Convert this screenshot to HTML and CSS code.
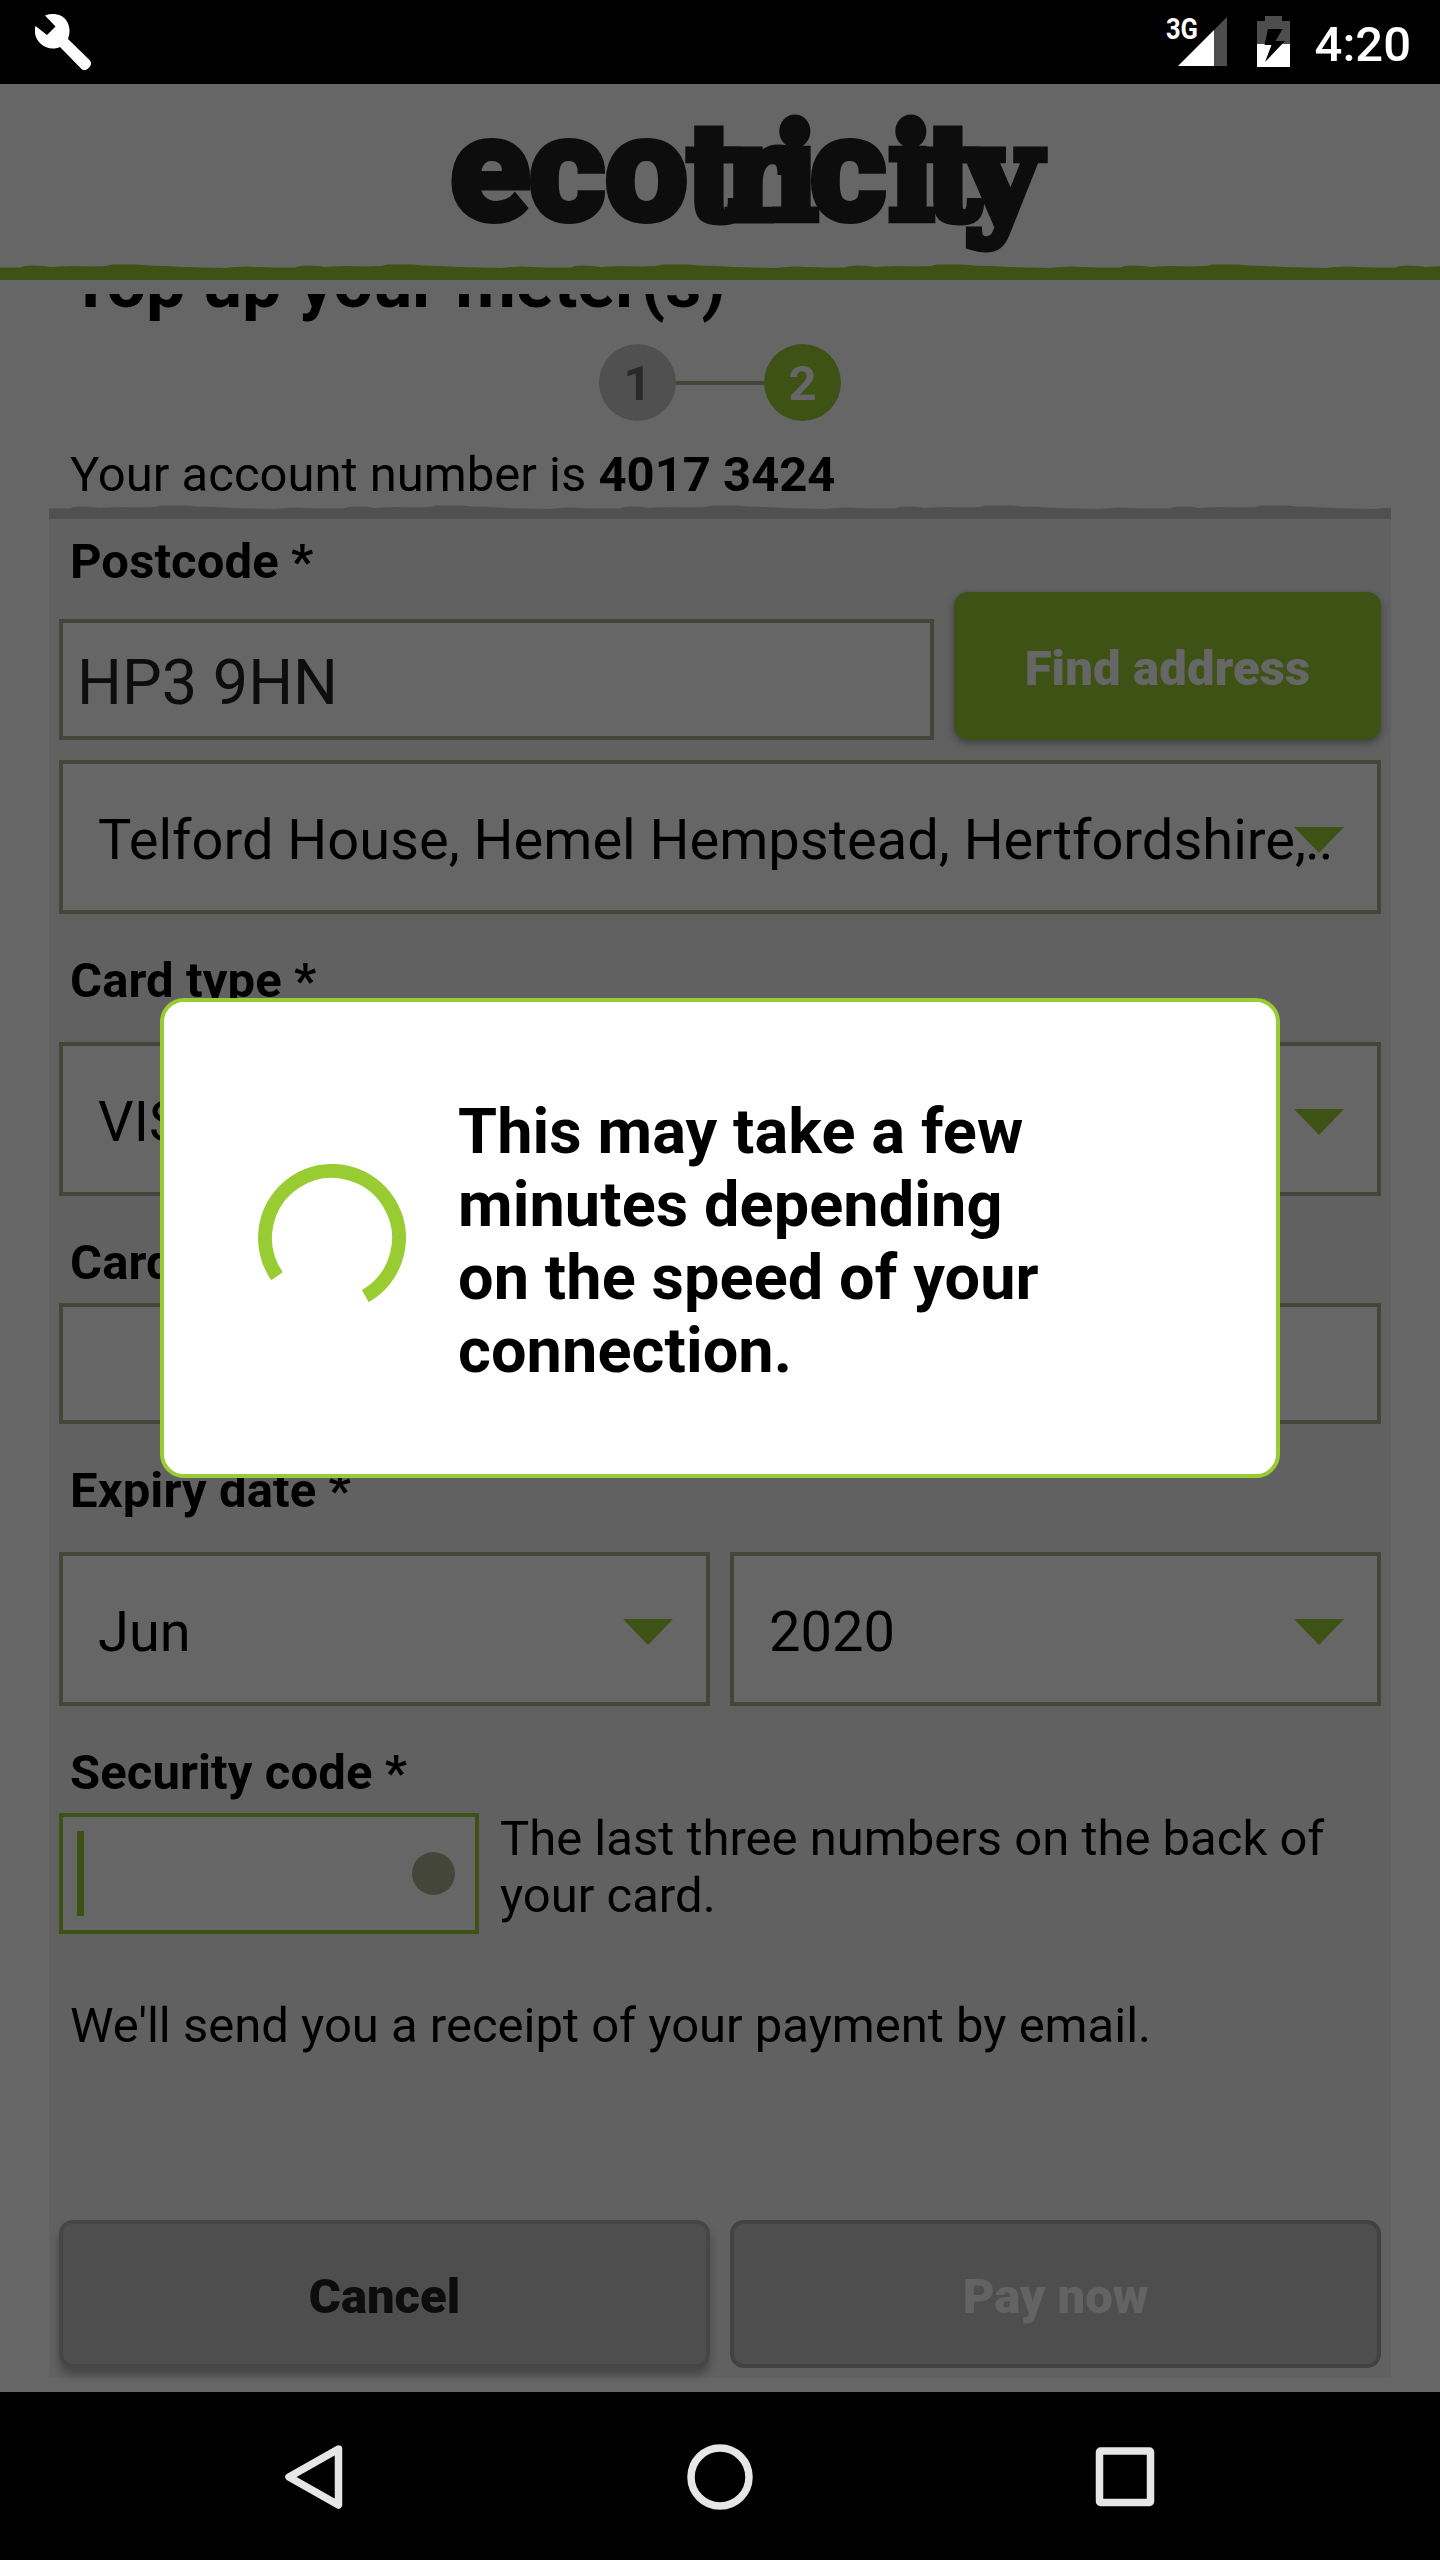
FILE: index.html
```html
<!DOCTYPE html>
<html lang="en">
<head>
<meta charset="utf-8">
<title>Top up your meter(s)</title>
<link rel="stylesheet" href="styles.css">
</head>
<body>
<div class="device">
  <div class="statusbar">
    <svg class="wrench" viewBox="0 0 56 56" width="56" height="56"><path d="M0.5 12 L12 21 L20.5 12.500 L10 1.500 C18-1.500 27 .5 31 6 C35 11.500 35.500 18 33 25 L54.500 46 C56.500 48 56.500 51 54.500 53 L52.500 55 C50.500 56.500 48 56.500 46.500 55 L25 33 C18 36 11 34.500 6 30 C0 24.500-1 18 .5 12Z"/></svg>
    <div class="status-right">
      <svg class="signal" viewBox="0 0 60 52" width="60" height="52">
        <path class="dim" d="M60 1V50H47V14Z"/><path d="M47 14V50H11Z"/>
        <text x="-1" y="23" textLength="32" lengthAdjust="spacingAndGlyphs">3G</text>
      </svg>
      <svg class="battery" viewBox="0 0 33 52" width="33" height="52">
        <path class="dim" d="M8 0H25V5H33V28H0V5H8Z"/><path d="M0 28H33V51H0Z"/>
        <path class="bolt" d="M11 13H25.500L18.500 25H28L8 46L14.500 29H7.500Z"/>
      </svg>
      <span class="clock">4:20</span>
    </div>
  </div>

  <div class="app">
    <header class="header">
      <svg class="logo" viewBox="0 0 600 140" width="600" height="140" role="img" aria-label="ecotricity">
        <text y="107"><tspan class="round" x="-2 77 153">eco</tspan><tspan class="slab" x="236 274 322" y="105">tri</tspan><tspan class="round" x="358" y="107">c</tspan><tspan class="slab" x="438 475" y="105">it</tspan><tspan class="slab wide" x="513" y="105">y</tspan></text>
      </svg>
      <svg class="torn green" width="1440" height="16">
        <defs><pattern id="torn-green" width="275" height="16" patternUnits="userSpaceOnUse"><path d="M0 16V3.500H20L25 2L32 1.500L44 2L50 3L58 2.500L72 2L90 2.500L106 2L112 .5H138L148 1.500L165 2L185 3L205 3.500L225 4L236 3L246 2.500L258 3L275 3.500V16Z"/></pattern></defs>
        <rect width="1440" height="16" fill="url(#torn-green)"/>
      </svg>
    </header>

    <main class="content">
      <div class="heading-clip"><h1>Top up your meter(s)</h1></div>
      <div class="steps"><span class="step">1</span><span class="step-line"></span><span class="step current">2</span></div>
      <p class="account">Your account number is <b>4017 3424</b></p>
      <svg class="torn" width="1342" height="14">
        <defs><pattern id="torn-grey" width="275" height="14" patternUnits="userSpaceOnUse"><path d="M0 14V3.500H20L25 2L32 1.500L44 2L50 3L58 2.500L72 2L90 2.500L106 2L112 .5H138L148 1.500L165 2L185 3L205 3.500L225 4L236 3L246 2.500L258 3L275 3.500V14Z"/></pattern></defs>
        <rect width="1342" height="14" fill="url(#torn-grey)"/>
      </svg>
      <form class="panel">
        <label class="label first">Postcode *</label>
        <div class="row postcode">
          <div class="input">HP3 9HN</div>
          <div class="btn primary">Find address</div>
        </div>
        <div class="select address"><span>Telford House, Hemel Hempstead, Hertfordshire,<span class="dots">..</span></span><i class="arrow"></i></div>
        <label class="label wide">Card type *</label>
        <div class="select"><span>VISA</span><i class="arrow"></i></div>
        <label class="label">Card number *</label>
        <div class="input"></div>
        <label class="label wide">Expiry date *</label>
        <div class="row halves">
          <div class="select"><span>Jun</span><i class="arrow"></i></div>
          <div class="select"><span>2020</span><i class="arrow"></i></div>
        </div>
        <label class="label">Security code *</label>
        <div class="row security">
          <div class="input focused"><i class="caret"></i><i class="dot"></i></div>
          <p>The last three numbers on the back of your card.</p>
        </div>
        <p class="receipt">We'll send you a receipt of your payment by email.</p>
        <div class="row halves actions">
          <div class="btn cancel">Cancel</div>
          <div class="btn disabled">Pay now</div>
        </div>
      </form>
    </main>

    <div class="scrim">
      <div class="dialog">
        <svg class="spinner" viewBox="-74 -74 148 148" width="148" height="148"><path d="M-55 38.200A67 67 0 1 1 33.300 58.100"/></svg>
        <p>This may take a few<br>minutes depending<br>on the speed of your<br>connection.</p>
      </div>
    </div>
  </div>

  <nav class="navbar">
    <svg viewBox="0 0 66 66" width="66" height="66"><path d="M56.500 5L7 33L56.500 61Z"/></svg>
    <svg viewBox="0 0 66 66" width="66" height="66"><circle cx="33" cy="33" r="29"/></svg>
    <svg viewBox="0 0 66 66" width="66" height="66"><rect x="7.500" y="7" width="51" height="51.500" rx="1"/></svg>
  </nav>
</div>
</body>
</html>
```

FILE: styles.css
```css
* { box-sizing: border-box; }
body { margin: 0; background: #000; font-family: Roboto, sans-serif; font-size: 49px; line-height: 57px; color: #000; }
p, h1 { margin: 0; }
svg { display: block; flex: none; }

.device { width: 1440px; height: 2560px; display: flex; flex-direction: column; overflow: hidden; }

.statusbar { height: 84px; background: #000; color: #fff; fill: #fff; display: flex; justify-content: space-between; align-items: flex-start; padding: 14px 29px 0 35px; }
.status-right { display: flex; padding-top: 2px; }
.signal { margin-right: 30px; overflow: visible; }
.signal text { font-size: 30px; font-weight: 700; }
.dim { fill: #4d4d4d; }
.bolt { fill: #000; }
.battery { margin-right: 25px; }
.clock { font-weight: 500; line-height: 57px; }

.app { position: relative; height: 2308px; background: #fff; display: flex; flex-direction: column; }
.header { height: 196px; padding-left: 451px; display: flex; flex-direction: column; justify-content: space-between; padding-top: 30px; }
.logo { fill: #222; stroke: #222; overflow: visible; }
.round { font: 900 151px Roboto, sans-serif; stroke-width: 4px; }
.slab { font: 700 131px "DejaVu Serif Condensed", "DejaVu Serif", serif; stroke-width: 9px; }
.slab.wide { font-family: "DejaVu Serif", serif; }
.torn { fill: #c9c9c9; }
.torn.green { fill: #9c3; margin-left: -451px; }

.content { padding: 14px 49px 0; display: flex; flex-direction: column; }
.heading-clip { height: 50px; overflow: hidden; display: flex; align-items: flex-end; padding-left: 20px; }
h1 { font-size: 70px; line-height: 82px; white-space: nowrap; margin-bottom: 20px; }
.steps { display: flex; justify-content: center; align-items: center; height: 77px; }
.step { width: 77px; height: 77px; border-radius: 50%; background: #c9c9c9; color: #666; font-weight: 700; line-height: 80px; text-align: center; }
.step.current { background: #9c3; color: #fff; }
.step-line { width: 88px; height: 4px; background: #aaaf91; }
.account { padding: 25px 21px 2px; }

.panel { background: #f2f2f2; padding: 14px 10px 0; height: 1859px; display: flex; flex-direction: column; }
.label { display: block; font-weight: 700; padding: 38px 11px 12px; flex: none; letter-spacing: .1px; }
.label.wide { padding-bottom: 33px; }
.label.first { padding: 0 11px 2px; }
.row { display: grid; gap: 20px; }
.postcode { grid-template-columns: 875px 427px; align-items: end; margin-bottom: 20px; }
.halves { grid-template-columns: 651px 651px; }
.security { grid-template-columns: 420px 1fr; gap: 21px; }
.security p { margin-top: -3px; }

.input, .select { border: 4px solid #aaaf91; background: #fff; display: flex; align-items: center; justify-content: space-between; flex: none; }
.input { height: 121px; padding: 6px 14px 0; font-size: 63px; color: #222; }
.input.focused { border-color: #9c3; padding: 0 20px 0 14px; }
.caret { width: 7px; height: 85px; background: #9c3; }
.dot { width: 43px; height: 43px; border-radius: 50%; background: #aaaf91; }
.select { height: 154px; padding: 6px 33px 0 35px; font-size: 56px; position: relative; white-space: nowrap; }
.address span { margin-right: -20px; }
.address .dots { margin: 0 0 0 -1px; letter-spacing: -1px; }
.arrow { width: 50px; height: 26px; background: #9c3; clip-path: polygon(0 0, 100% 0, 50% 100%); position: absolute; right: 33px; top: 63px; }

.btn { height: 148px; border-radius: 14px; display: flex; align-items: center; justify-content: center; font-weight: 900; padding-top: 5px; }
.primary { background: #9c3; color: #fff; box-shadow: 0 3px 9px rgba(0,0,0,.35); letter-spacing: .15px; }
.cancel { background: #c3c3c3; border: 4px solid #b0b0b0; color: #222; box-shadow: 0 7px 9px rgba(0,0,0,.28); }
.disabled { background: #c4c4c4; border: 4px solid #a5a5a5; color: #f7f7f7; }
.receipt { padding: 63px 11px 0; }
.actions { margin-top: auto; margin-bottom: 10px; }

.scrim { position: absolute; inset: 0; background: rgba(0,0,0,.6); display: flex; align-items: center; justify-content: center; }
.dialog { width: 1120px; height: 480px; border: 4px solid #9c3; border-radius: 24px; background: #fff; display: flex; align-items: center; gap: 52px; padding-left: 94px; }
.dialog p { font-size: 63px; font-weight: 700; line-height: 73px; letter-spacing: .1px; padding-top: 6px; }
.spinner { fill: none; stroke: #9c3; stroke-width: 14; }

.navbar { height: 168px; background: #000; display: flex; justify-content: center; align-items: center; gap: 339px; padding-top: 1px; fill: none; stroke: #e6e6e6; stroke-width: 7.5; stroke-linejoin: round; }
```
